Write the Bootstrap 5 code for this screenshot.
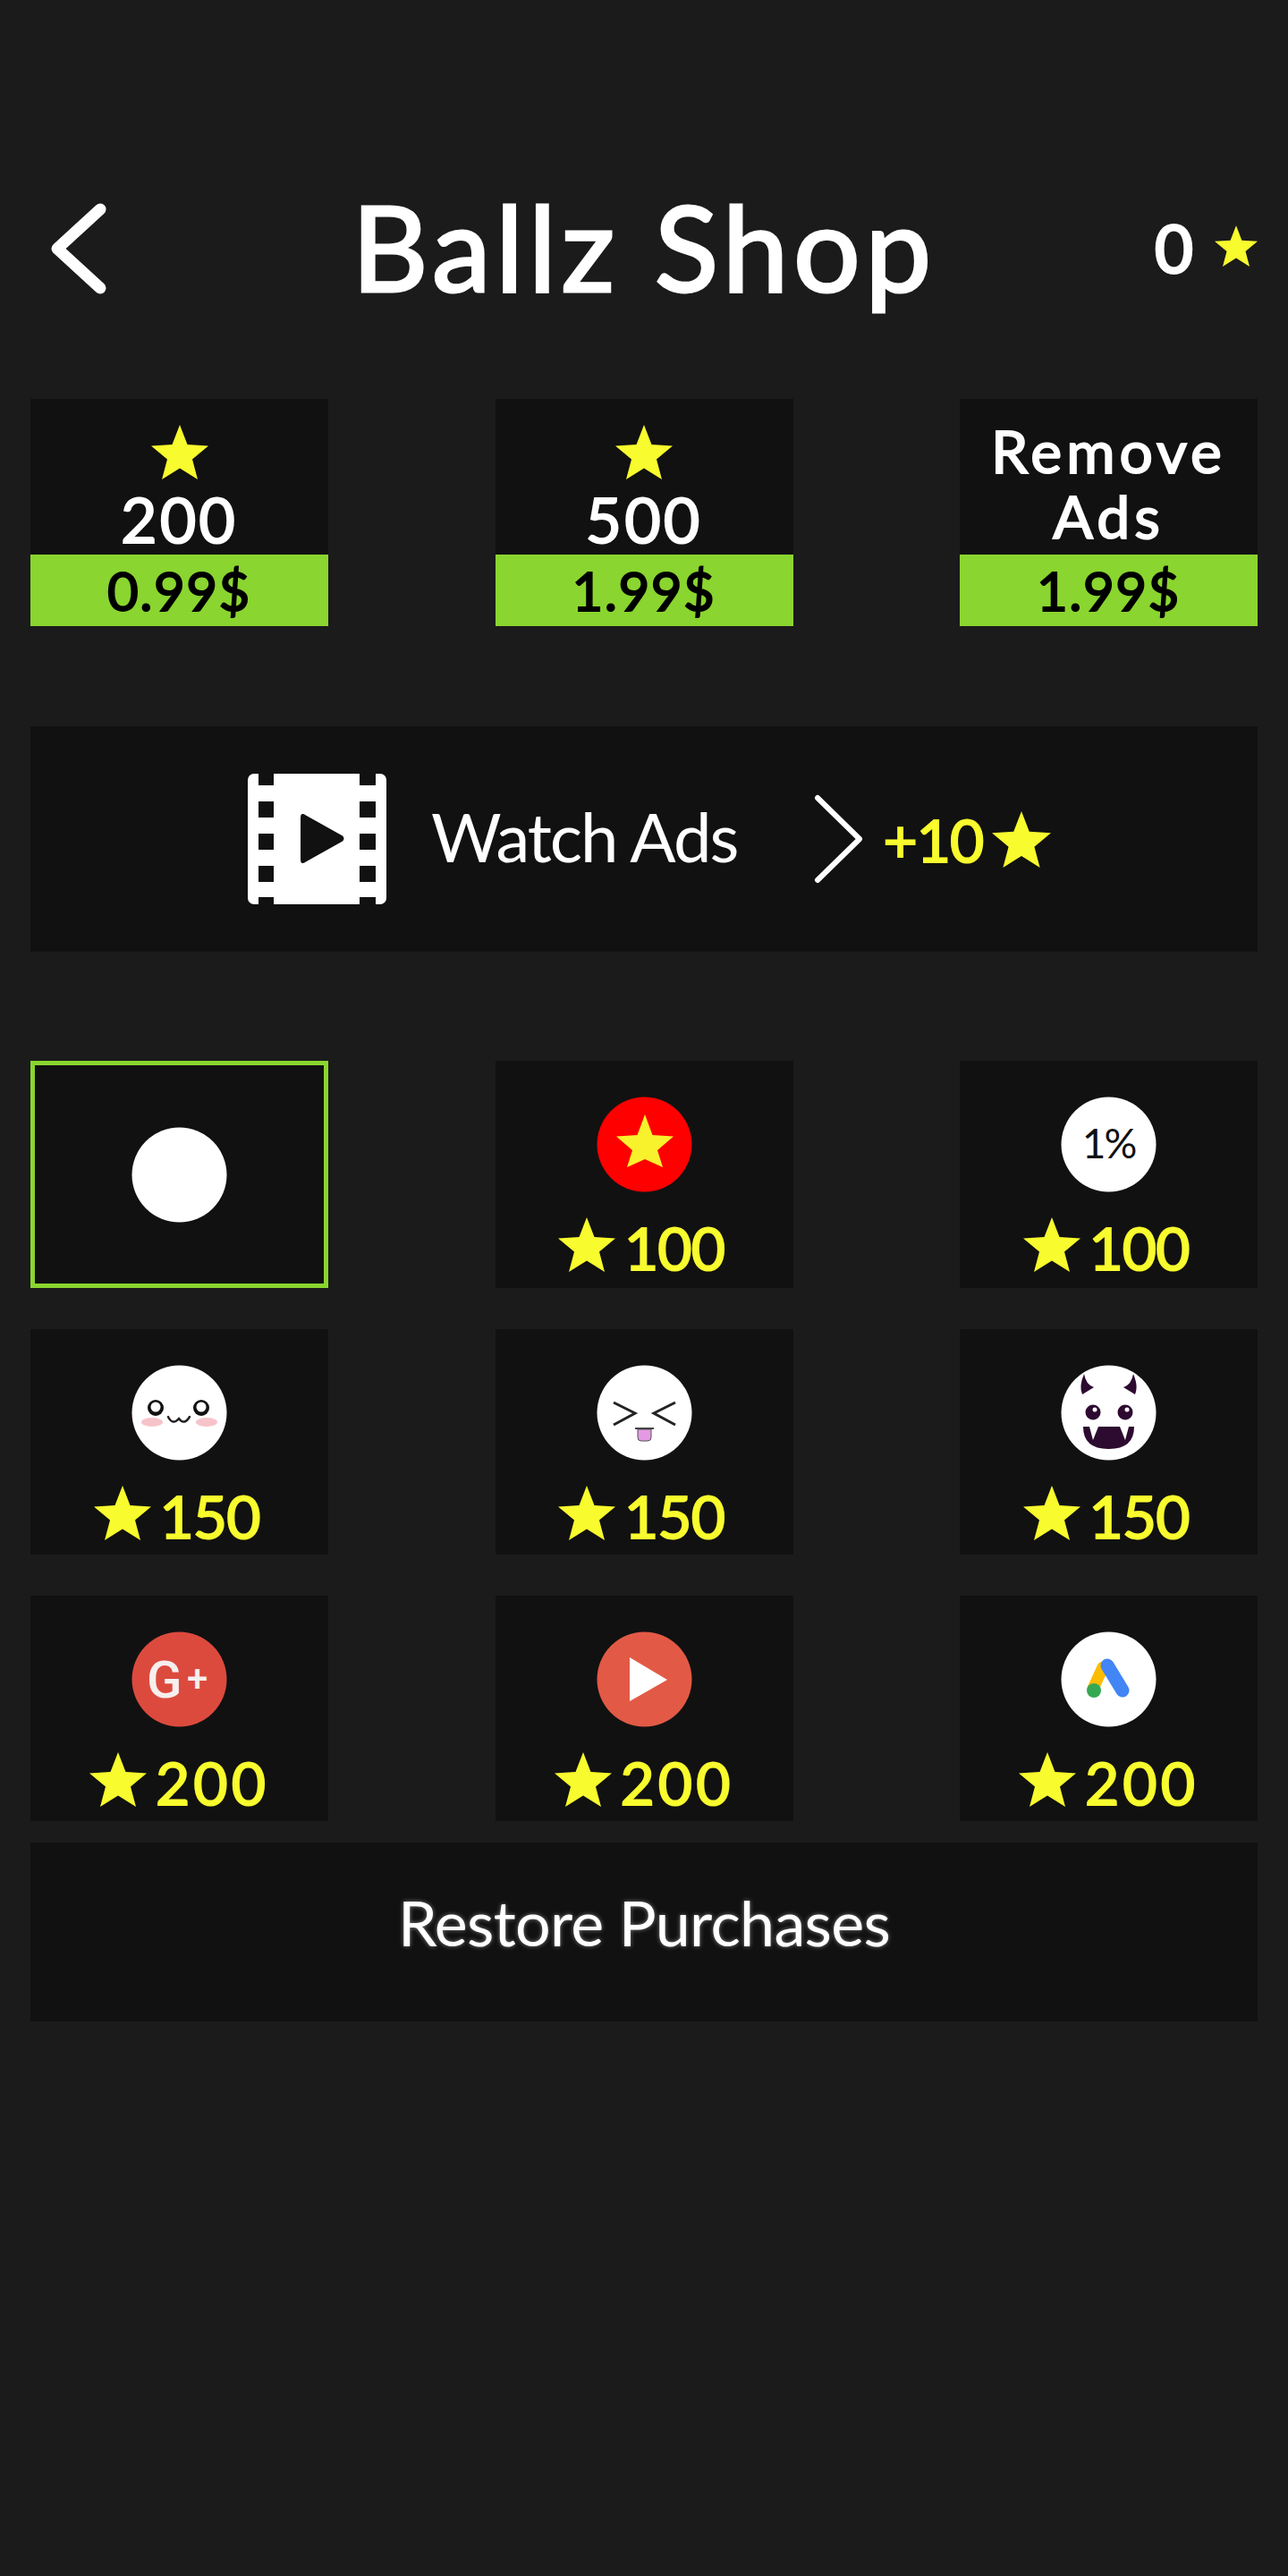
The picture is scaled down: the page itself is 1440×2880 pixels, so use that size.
<!DOCTYPE html>
<html lang="en">
<head>
    <meta charset="UTF-8">
    <meta name="viewport" content="width=device-width, initial-scale=1.0">
    <title>Ballz Shop</title>
    <link href="https://cdn.jsdelivr.net/npm/bootstrap@5.3.3/dist/css/bootstrap.min.css" rel="stylesheet">
    <style>
        html, body {
            height: 100%;
            margin: 0;
        }
        body {
            background-color: #1b1b1b;
            color: #fff;
            font-family: "Lato", "Liberation Sans", sans-serif;
            padding: 200px 34px 0;
        }
        .shop-header {
            height: 150px;
        }
        .header-side {
            flex: 1 1 0;
        }
        .back-icon {
            width: 72px;
            height: 116px;
            margin-left: 18px;
            margin-top: 5px;
        }
        .shop-title {
            font-size: 132px;
            line-height: 150px;
            margin: 0;
            font-weight: 400;
            -webkit-text-stroke: 3px #fff;
            letter-spacing: 5.500px;
        }
        .star-count {
            font-size: 74px;
            line-height: 1;
            padding-top: 4px;
            -webkit-text-stroke: 3px #fff;
        }
        .star-icon {
            fill: #f8fb2d;
            flex: none;
        }
        .count-star {
            width: 48px;
            height: 46px;
        }
        .tile {
            width: 333px;
            background-color: #111;
        }
        .offers-row {
            margin-top: 96px;
        }
        .offer-tile {
            height: 254px;
        }
        .offer-body {
            height: 174px;
            padding-top: 29px;
        }
        .offer-star {
            width: 64px;
            height: 61px;
        }
        .offer-amount {
            font-size: 70px;
            line-height: 66px;
            margin-top: 11px;
            -webkit-text-stroke: 2px #fff;
            letter-spacing: 3px;
        }
        .offer-label {
            font-size: 66px;
            line-height: 73px;
            margin-top: -8px;
            letter-spacing: 5px;
            -webkit-text-stroke: 2px #fff;
        }
        .offer-price {
            height: 80px;
            background-color: #8ad52f;
            color: #000;
            font-size: 60px;
            letter-spacing: 1.500px;
            -webkit-text-stroke: 2px #000;
        }
        .watch-tile {
            width: 100%;
            height: 252px;
            margin-top: 112px;
            padding-left: 243px;
        }
        .film-icon {
            width: 155px;
            height: 146px;
        }
        .watch-text {
            font-size: 76px;
            margin-left: 50px;
            letter-spacing: -2px;
            padding-bottom: 6px;
        }
        .next-icon {
            width: 56px;
            height: 100px;
            margin-left: 86px;
        }
        .watch-reward {
            color: #f8fb2d;
            font-size: 66px;
            margin-left: 21px;
            letter-spacing: -1px;
            -webkit-text-stroke: 2px #f8fb2d;
        }
        .watch-star {
            width: 66px;
            height: 63px;
            margin-left: 10px;
        }
        .items-block {
            margin-top: 122px;
        }
        .item-tile {
            height: 252px;
            padding-top: 40px;
        }
        .items-row + .items-row {
            margin-top: 46px;
        }
        .items-row:first-child .item-tile {
            height: 254px;
        }
        .item-tile.selected-tile {
            border: 5px solid #8ad52f;
            padding-top: 0;
        }
        .ball-icon {
            width: 107px;
            height: 107px;
            display: block;
        }
        .item-price {
            color: #f8fb2d;
            font-size: 66px;
            line-height: 66px;
            margin-top: 29px;
            padding-right: 6px;
            letter-spacing: -1px;
            -webkit-text-stroke: 2px #f8fb2d;
        }
        .price-wide {
            letter-spacing: 4px;
            padding-right: 0;
        }
        .price-star {
            width: 64px;
            height: 61px;
            margin-right: 10px;
            margin-top: -8px;
        }
        .restore-tile {
            width: 100%;
            height: 200px;
            margin-top: 24px;
            padding-bottom: 22px;
            font-size: 70px;
            letter-spacing: -0.700px;
            text-shadow: 0 0 5px rgba(255, 255, 255, 0.45);
        }
    </style>
</head>
<body>
    <svg width="0" height="0" class="position-absolute">
        <symbol id="star" viewBox="0 0 64 61">
            <polygon points="32,0 40.500,22 64,23.500 46,38.500 52,61 32,48.500 12,61 18,38.500 0,23.500 23.500,22"/>
        </symbol>
    </svg>

    <!-- Header -->
    <header class="shop-header d-flex align-items-center">
        <div class="header-side">
            <svg class="back-icon d-block" viewBox="0 0 72 116" fill="none" stroke="#fff" stroke-width="13" stroke-linecap="round" stroke-linejoin="round">
                <path d="M60 14 L12 58 L60 102"/>
            </svg>
        </div>
        <h1 class="shop-title">Ballz Shop</h1>
        <div class="header-side d-flex align-items-center justify-content-end gap-4">
            <span class="star-count">0</span>
            <svg class="star-icon count-star"><use href="#star"/></svg>
        </div>
    </header>

    <!-- In-app purchases -->
    <section class="offers-row d-flex justify-content-between">
        <div class="tile offer-tile d-flex flex-column">
            <div class="offer-body d-flex flex-column align-items-center">
                <svg class="star-icon offer-star"><use href="#star"/></svg>
                <div class="offer-amount">200</div>
            </div>
            <div class="offer-price d-flex align-items-center justify-content-center">0.99$</div>
        </div>
        <div class="tile offer-tile d-flex flex-column">
            <div class="offer-body d-flex flex-column align-items-center">
                <svg class="star-icon offer-star"><use href="#star"/></svg>
                <div class="offer-amount">500</div>
            </div>
            <div class="offer-price d-flex align-items-center justify-content-center">1.99$</div>
        </div>
        <div class="tile offer-tile d-flex flex-column">
            <div class="offer-body text-center">
                <div class="offer-label">Remove<br>Ads</div>
            </div>
            <div class="offer-price d-flex align-items-center justify-content-center">1.99$</div>
        </div>
    </section>

    <!-- Watch ads -->
    <section class="tile watch-tile d-flex align-items-center">
        <svg class="film-icon" viewBox="0 0 155 146">
            <rect width="155" height="146" rx="7" fill="#fff"/>
            <g fill="#111">
                <rect x="12" y="0" width="17" height="13"/><rect x="12" y="31" width="17" height="18"/>
                <rect x="12" y="67" width="17" height="18"/><rect x="12" y="103" width="17" height="18"/>
                <rect x="12" y="138" width="17" height="8"/>
                <rect x="125" y="0" width="18" height="13"/><rect x="125" y="31" width="18" height="18"/>
                <rect x="125" y="67" width="18" height="18"/><rect x="125" y="103" width="18" height="18"/>
                <rect x="125" y="138" width="18" height="8"/>
                <path d="M60 49 Q60 44 64 47 L105 70 Q108 72.500 105 75 L64 98 Q60 101 60 96 Z" stroke="#111" stroke-width="2"/>
            </g>
        </svg>
        <span class="watch-text">Watch Ads</span>
        <svg class="next-icon" viewBox="0 0 56 100" fill="none" stroke="#fff" stroke-width="6" stroke-linecap="round" stroke-linejoin="round">
            <path d="M4 4 L51 50 L4 96"/>
        </svg>
        <span class="watch-reward">+10</span>
        <svg class="star-icon watch-star"><use href="#star"/></svg>
    </section>

    <!-- Ball skins -->
    <section class="items-block">
        <div class="items-row d-flex justify-content-between">
            <div class="tile item-tile selected-tile d-flex align-items-center justify-content-center">
                <svg class="ball-icon" viewBox="0 0 107 107"><circle cx="53.500" cy="53.500" r="53" fill="#fff"/></svg>
            </div>
            <div class="tile item-tile d-flex flex-column align-items-center">
                <svg class="ball-icon" viewBox="0 0 107 107">
                    <circle cx="53.500" cy="53.500" r="53" fill="#fe0000"/>
                    <polygon fill="#f8f22d" points="54,20 62.500,43 86,44.500 68,60 74,79 54,70 34,79 40,60 22,44.500 45.500,43"/>
                </svg>
                <div class="item-price d-flex align-items-center">
                    <svg class="star-icon price-star"><use href="#star"/></svg>100
                </div>
            </div>
            <div class="tile item-tile d-flex flex-column align-items-center">
                <svg class="ball-icon" viewBox="0 0 107 107">
                    <circle cx="53.500" cy="53.500" r="53" fill="#fff"/>
                    <text x="53.500" y="69" text-anchor="middle" font-family="Lato" font-size="46" letter-spacing="-2" fill="#111">1%</text>
                </svg>
                <div class="item-price d-flex align-items-center">
                    <svg class="star-icon price-star"><use href="#star"/></svg>100
                </div>
            </div>
        </div>

        <div class="items-row d-flex justify-content-between">
            <div class="tile item-tile d-flex flex-column align-items-center">
                <svg class="ball-icon" viewBox="0 0 107 107">
                    <circle cx="53.500" cy="53.500" r="53" fill="#fff"/>
                    <ellipse cx="23" cy="64" rx="12" ry="5" fill="#f7c3ca"/>
                    <ellipse cx="84" cy="64" rx="12" ry="5" fill="#f7c3ca"/>
                    <circle cx="27" cy="48" r="9" fill="#111"/>
                    <circle cx="78" cy="48" r="9" fill="#111"/>
                    <circle cx="27" cy="47" r="5.500" fill="#fff"/>
                    <circle cx="78" cy="47" r="5.500" fill="#fff"/>
                    <path d="M41 58 Q46 68 53 60 Q59 68 65 58" fill="none" stroke="#222" stroke-width="2.500" stroke-linecap="round"/>
                </svg>
                <div class="item-price d-flex align-items-center">
                    <svg class="star-icon price-star"><use href="#star"/></svg>150
                </div>
            </div>
            <div class="tile item-tile d-flex flex-column align-items-center">
                <svg class="ball-icon" viewBox="0 0 107 107">
                    <circle cx="53.500" cy="53.500" r="53" fill="#fff"/>
                    <path d="M19 42 L43 54 L19 67 M88 42 L64 54 L88 67" fill="none" stroke="#222" stroke-width="3"/>
                    <path d="M46 72 H61 V81 Q61 85 57 85 H50 Q46 85 46 81 Z" fill="#e49ae2" stroke="#555" stroke-width="1"/>
                    <path d="M43 71 H64" stroke="#444" stroke-width="2"/>
                </svg>
                <div class="item-price d-flex align-items-center">
                    <svg class="star-icon price-star"><use href="#star"/></svg>150
                </div>
            </div>
            <div class="tile item-tile d-flex flex-column align-items-center">
                <svg class="ball-icon" viewBox="0 0 107 107">
                    <circle cx="53.500" cy="53.500" r="53" fill="#fff"/>
                    <g fill="#2d0a2f">
                        <path d="M26 10 Q20 24 24 33 L37 25 Q28 22 26 10 Z"/>
                        <path d="M81 10 Q87 24 83 33 L70 25 Q79 22 81 10 Z"/>
                        <circle cx="36" cy="53" r="8.500"/>
                        <circle cx="72" cy="53" r="8.500"/>
                        <path d="M25 69 H82 Q82 94 53.500 94 Q25 94 25 69 Z"/>
                    </g>
                    <circle cx="38" cy="50" r="2.500" fill="#fff"/>
                    <circle cx="74" cy="50" r="2.500" fill="#fff"/>
                    <path d="M32 69 H42 L36 84 Z M66 69 H76 L72 84 Z" fill="#fff"/>
                </svg>
                <div class="item-price d-flex align-items-center">
                    <svg class="star-icon price-star"><use href="#star"/></svg>150
                </div>
            </div>
        </div>

        <div class="items-row d-flex justify-content-between">
            <div class="tile item-tile d-flex flex-column align-items-center">
                <svg class="ball-icon" viewBox="0 0 107 107">
                    <circle cx="53.500" cy="53.500" r="53" fill="#dc4a3e"/>
                    <text x="17" y="74" font-family="Roboto" font-weight="500" font-size="58" fill="#f7eeee">G</text>
                    <text x="62" y="67" font-family="Roboto" font-weight="500" font-size="42" fill="#f7eeee">+</text>
                </svg>
                <div class="item-price price-wide d-flex align-items-center">
                    <svg class="star-icon price-star"><use href="#star"/></svg>200
                </div>
            </div>
            <div class="tile item-tile d-flex flex-column align-items-center">
                <svg class="ball-icon" viewBox="0 0 107 107">
                    <circle cx="53.500" cy="53.500" r="53" fill="#e25a46"/>
                    <polygon fill="#fff" points="37,29 37,78 79,54"/>
                </svg>
                <div class="item-price price-wide d-flex align-items-center">
                    <svg class="star-icon price-star"><use href="#star"/></svg>200
                </div>
            </div>
            <div class="tile item-tile d-flex flex-column align-items-center">
                <svg class="ball-icon" viewBox="0 0 107 107">
                    <circle cx="53.500" cy="53.500" r="53" fill="#fff"/>
                    <path d="M47 40 L36 64" stroke="#fbbc04" stroke-width="13" stroke-linecap="round"/>
                    <circle cx="37" cy="66" r="8" fill="#34a853"/>
                    <path d="M52 38 L69 66" stroke="#4285f4" stroke-width="15" stroke-linecap="round"/>
                </svg>
                <div class="item-price price-wide d-flex align-items-center">
                    <svg class="star-icon price-star"><use href="#star"/></svg>200
                </div>
            </div>
        </div>
    </section>

    <!-- Restore -->
    <section class="tile restore-tile d-flex align-items-center justify-content-center">Restore Purchases</section>

    <script src="https://cdn.jsdelivr.net/npm/bootstrap@5.3.3/dist/js/bootstrap.bundle.min.js"></script>
</body>
</html>
